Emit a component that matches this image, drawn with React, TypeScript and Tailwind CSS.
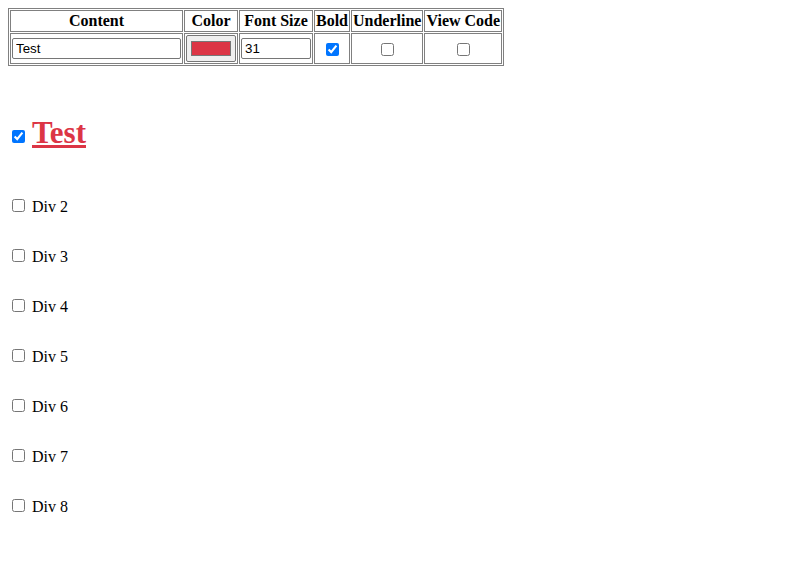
import React from "react";

const serif = { fontFamily: '"Liberation Serif", "Times New Roman", serif' };

export default function App() {
  const divs = ["Div 2", "Div 3", "Div 4", "Div 5", "Div 6", "Div 7", "Div 8"];
  const th = "border border-[#808080] p-[1px] font-bold text-[16px] leading-[18px] text-center text-black";
  const td = "border border-[#808080] p-[1px] text-center align-middle";
  const inputCls =
    "border border-[#767676] rounded-[2px] px-[3px] h-[21px] text-[13.33px] leading-[15px] text-black bg-white font-['Liberation_Sans',Arial,sans-serif] align-middle";
  return (
    <div className="m-2 text-black bg-white text-[16px] font-['Liberation_Serif','Times_New_Roman',serif]" style={serif}>
      <table className="border border-[#808080] border-separate border-spacing-[1px]">
        <thead>
          <tr>
            <th className={th}>Content</th>
            <th className={th}>Color</th>
            <th className={th}>Font Size</th>
            <th className={th}>Bold</th>
            <th className={th}>Underline</th>
            <th className={th}>View Code</th>
          </tr>
        </thead>
        <tbody>
          <tr>
            <td className={td}>
              <input type="text" defaultValue="Test" className={`${inputCls} w-[169px] block`} />
            </td>
            <td className={td}>
              <div className="w-[50px] h-[27px] bg-[#efefef] border border-[#767676] rounded-[2px] flex items-center justify-center">
                <div className="w-[40px] h-[15px] bg-[#dc3545] border border-[#777]" />
              </div>
            </td>
            <td className={td}>
              <input type="text" defaultValue="31" className={`${inputCls} w-[70px] block`} />
            </td>
            <td className={td}>
              <input type="checkbox" defaultChecked className="m-[3px_3px_3px_4px] align-middle" />
            </td>
            <td className={td}>
              <input type="checkbox" className="m-[3px_3px_3px_4px] align-middle" />
            </td>
            <td className={td}>
              <input type="checkbox" className="m-[3px_3px_3px_4px] align-middle" />
            </td>
          </tr>
        </tbody>
      </table>

      <div className="mt-[49px] h-[36px] leading-[36px] whitespace-nowrap">
        <input type="checkbox" defaultChecked className="m-[3px_3px_3px_4px]" />{" "}
        <span className="text-[31px] font-bold underline text-[#dc3545]">Test</span>
      </div>

      <div className="mt-[45px] flex flex-col gap-[32px]">
        {divs.map((d) => (
          <div key={d} className="h-[18px] leading-[18px] whitespace-nowrap">
            <input type="checkbox" className="m-[3px_3px_3px_4px]" /> {d}
          </div>
        ))}
      </div>
    </div>
  );
}
